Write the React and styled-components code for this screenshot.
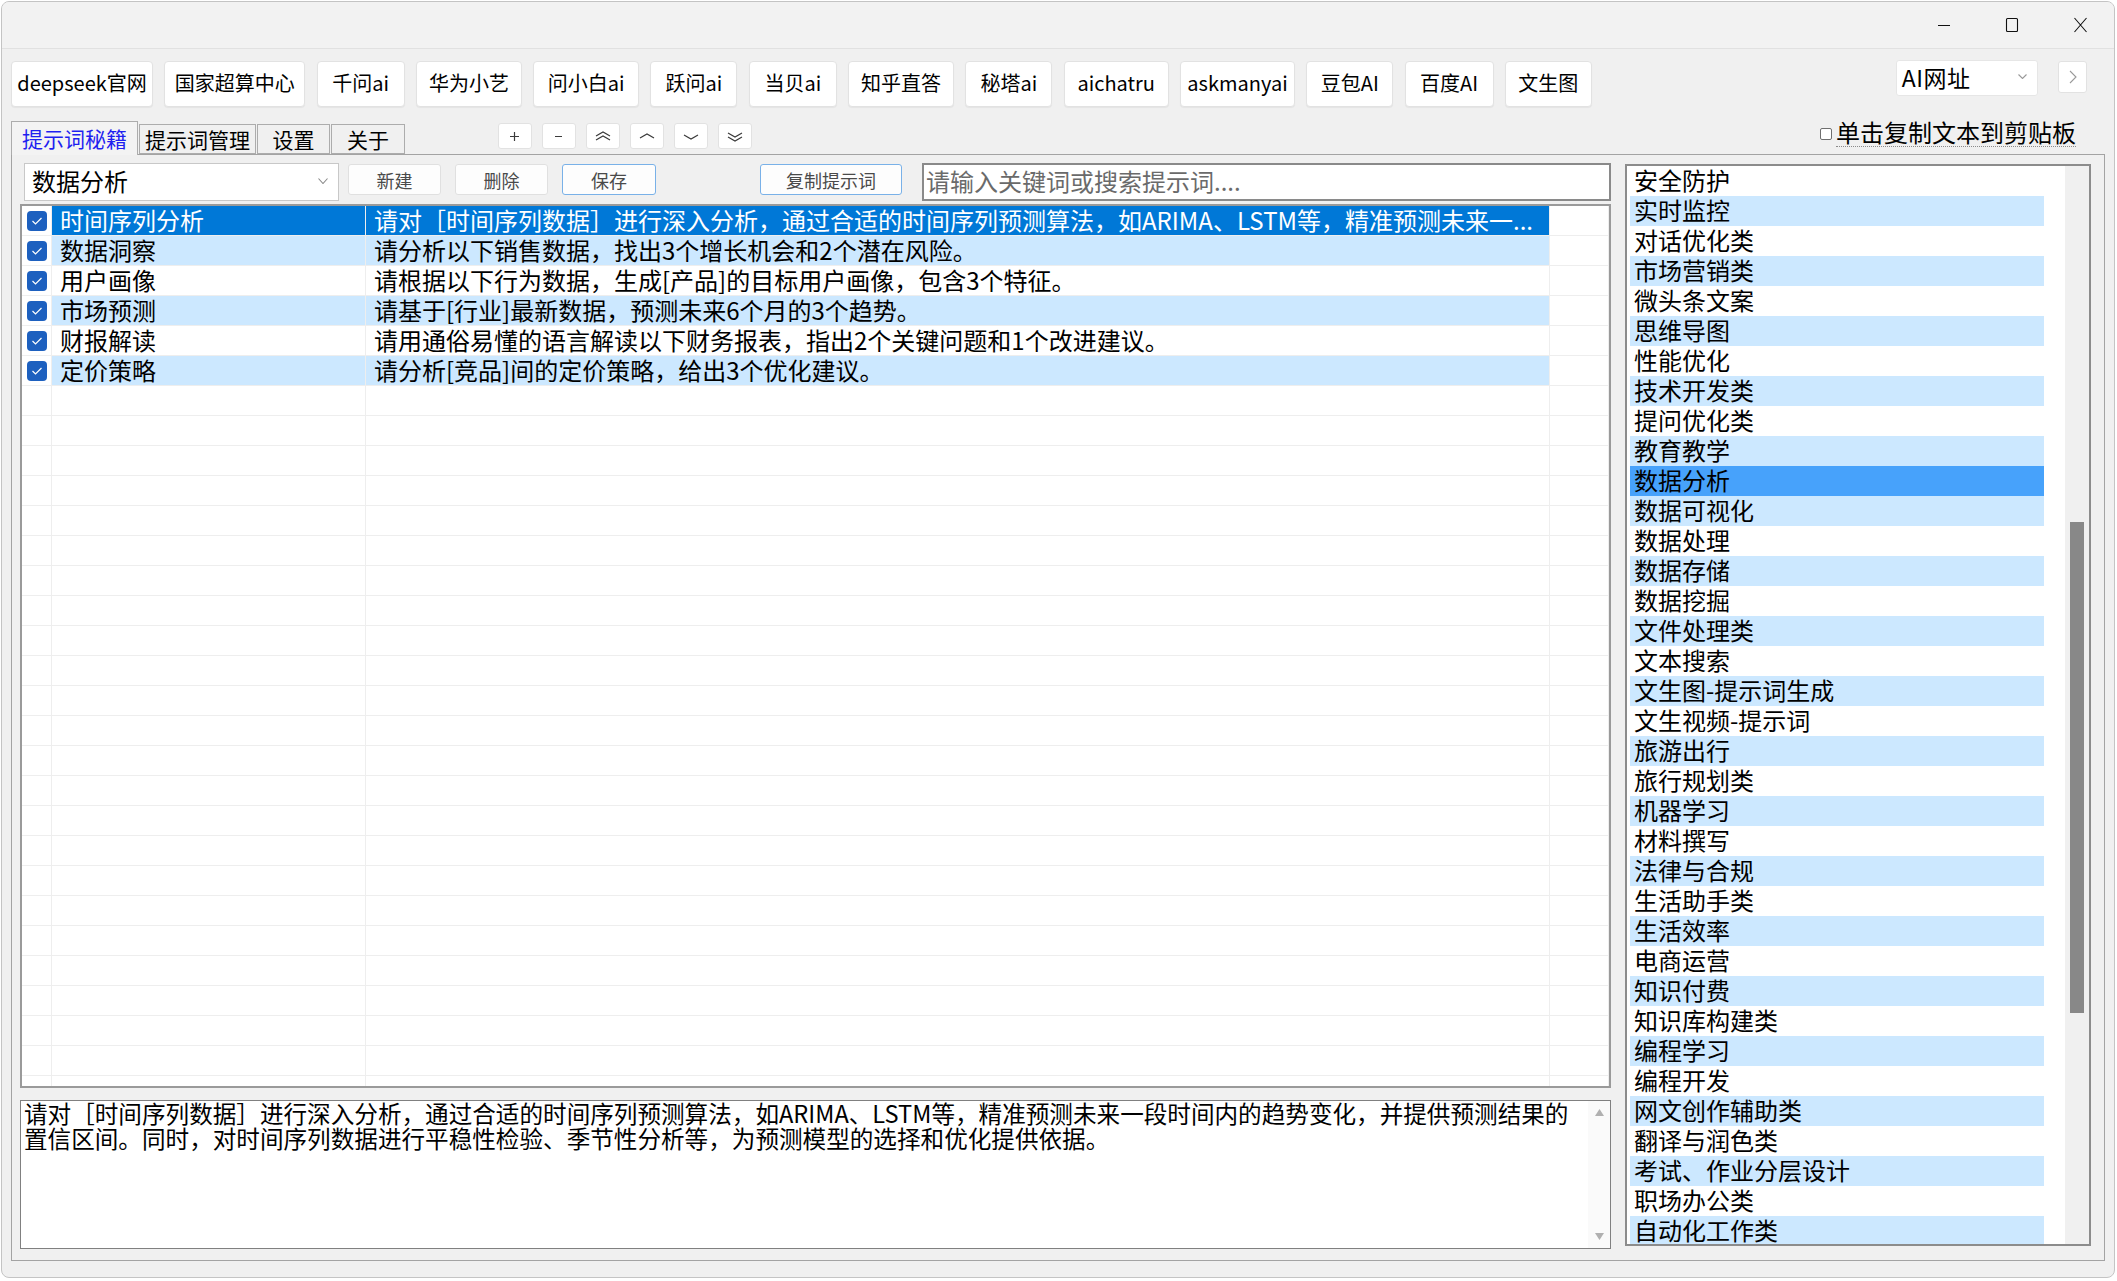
import React from 'react';
import styled, { createGlobalStyle } from 'styled-components';

const GlobalStyle = createGlobalStyle`
  html, body {
    margin: 0;
    padding: 0;
    background: #ffffff;
  }
  body {
    font-family: "Noto Sans CJK SC", "Noto Sans", "Liberation Sans", sans-serif;
    color: #000;
  }
  * {
    box-sizing: border-box;
  }
`;

const links = [
  { label: 'deepseek官网', w: 142 },
  { label: '国家超算中心', w: 141 },
  { label: '千问ai', w: 88 },
  { label: '华为小艺', w: 106 },
  { label: '问小白ai', w: 106 },
  { label: '跃问ai', w: 87 },
  { label: '当贝ai', w: 88 },
  { label: '知乎直答', w: 106 },
  { label: '秘塔ai', w: 87 },
  { label: 'aichatru', w: 105 },
  { label: 'askmanyai', w: 115 },
  { label: '豆包AI', w: 87 },
  { label: '百度AI', w: 89 },
  { label: '文生图', w: 87 },
];

const tabs = [
  { label: '提示词秘籍', w: 127, active: true },
  { label: '提示词管理', w: 117 },
  { label: '设置', w: 73 },
  { label: '关于', w: 74 },
];

const prompts = [
  ['时间序列分析', '请对［时间序列数据］进行深入分析，通过合适的时间序列预测算法，如ARIMA、LSTM等，精准预测未来一...'],
  ['数据洞察', '请分析以下销售数据，找出3个增长机会和2个潜在风险。'],
  ['用户画像', '请根据以下行为数据，生成[产品]的目标用户画像，包含3个特征。'],
  ['市场预测', '请基于[行业]最新数据，预测未来6个月的3个趋势。'],
  ['财报解读', '请用通俗易懂的语言解读以下财务报表，指出2个关键问题和1个改进建议。'],
  ['定价策略', '请分析[竞品]间的定价策略，给出3个优化建议。'],
];

const categories = [
  '安全防护', '实时监控', '对话优化类', '市场营销类', '微头条文案', '思维导图',
  '性能优化', '技术开发类', '提问优化类', '教育教学', '数据分析', '数据可视化',
  '数据处理', '数据存储', '数据挖掘', '文件处理类', '文本搜索', '文生图-提示词生成',
  '文生视频-提示词', '旅游出行', '旅行规划类', '机器学习', '材料撰写', '法律与合规',
  '生活助手类', '生活效率', '电商运营', '知识付费', '知识库构建类', '编程学习',
  '编程开发', '网文创作辅助类', '翻译与润色类', '考试、作业分层设计', '职场办公类', '自动化工作类',
];

const detailText =
  '请对［时间序列数据］进行深入分析，通过合适的时间序列预测算法，如ARIMA、LSTM等，精准预测未来一段时间内的趋势变化，并提供预测结果的\n置信区间。同时，对时间序列数据进行平稳性检验、季节性分析等，为预测模型的选择和优化提供依据。';

const Window = styled.div`
  width: 2114px;
  height: 1277px;
  margin: 1px 0 0 1px;
  border: 1px solid #c4c4c4;
  border-radius: 8px;
  background: #f0f0f0;
  display: flex;
  flex-direction: column;
  overflow: hidden;
`;

const TitleBar = styled.div`
  height: 47px;
  flex-shrink: 0;
  display: flex;
  justify-content: flex-end;
  border-bottom: 1px solid #e1e1e1;
  background: #f2f2f2;
`;

const TitleButton = styled.div`
  width: 68px;
  height: 100%;
  display: flex;
  align-items: center;
  justify-content: center;
`;

const Body = styled.div`
  flex: 1;
  display: flex;
  flex-direction: column;
  padding: 0 9px 16px 9px;
  min-height: 0;
`;

const LinkBar = styled.div`
  margin-top: 12px;
  display: flex;
  align-items: flex-start;
  gap: 11.3px;
`;

const LinkButton = styled.div`
  width: ${(p) => p.w}px;
  height: 46px;
  flex-shrink: 0;
  display: flex;
  align-items: center;
  justify-content: center;
  padding-bottom: 2px;
  background: #ffffff;
  border: 1px solid #e2e2e2;
  border-radius: 4px;
  box-shadow: 0 1px 1px rgba(0, 0, 0, 0.05);
  font-size: 20px;
  line-height: 26px;
  white-space: nowrap;
`;

const UrlCombo = styled.div`
  margin-left: auto;
  margin-top: -1px;
  width: 142px;
  height: 36px;
  display: flex;
  align-items: center;
  justify-content: space-between;
  padding: 0 10px 3px 5px;
  background: #ffffff;
  border: 1px solid #e6e6e6;
  border-radius: 3px;
  font-size: 23px;
  line-height: 28px;
  letter-spacing: 0.5px;
`;

const NextButton = styled.div`
  width: 29px;
  height: 32px;
  margin-left: 9px;
  margin-right: 18px;
  display: flex;
  align-items: center;
  justify-content: center;
  background: #ffffff;
  border: 1px solid #e2e2e2;
  border-radius: 3px;
`;

const TabRow = styled.div`
  margin-top: 14px;
  height: 33px;
  display: flex;
  align-items: flex-end;
  gap: 1px;
  position: relative;
  z-index: 2;
`;

const Tab = styled.div`
  width: ${(p) => p.w}px;
  height: ${(p) => (p.active ? 34 : 30)}px;
  margin-bottom: ${(p) => (p.active ? -1 : 0)}px;
  flex-shrink: 0;
  display: flex;
  align-items: center;
  justify-content: center;
  padding-bottom: ${(p) => (p.active ? 1 : 0)}px;
  border: 1px solid #acacac;
  border-bottom: ${(p) => (p.active ? 'none' : '1px solid #acacac')};
  background: ${(p) => (p.active ? '#f3f3f3' : '#f0f0f0')};
  color: ${(p) => (p.active ? '#1f1ff0' : '#000')};
  font-size: 21px;
  line-height: 26px;
  white-space: nowrap;
`;

const OrderGroup = styled.div`
  align-self: flex-start;
  margin-top: 2px;
  margin-left: 92px;
  display: flex;
  gap: 10px;
`;

const OrderButton = styled.div`
  width: 34px;
  height: 26px;
  display: flex;
  align-items: center;
  justify-content: center;
  background: #ffffff;
  border: 1px solid #e2e2e2;
  border-radius: 3px;
`;

const CopyOption = styled.label`
  margin-left: auto;
  margin-right: 29px;
  align-self: flex-start;
  margin-top: -3px;
  display: flex;
  align-items: center;
  gap: 4px;
  font-size: 24px;
  line-height: 28px;
`;

const SmallBox = styled.span`
  width: 12px;
  height: 12px;
  margin-top: 2px;
  border: 1px solid #6f6f6f;
  border-radius: 2px;
  background: #ffffff;
`;

const OptionText = styled.span`
  border-bottom: 1px dotted #8a8a8a;
`;

const TabPanel = styled.div`
  flex: 1;
  min-height: 0;
  display: flex;
  gap: 14px;
  padding: 8px 12px 10px 8px;
  border: 1px solid #a3a3a3;
  background: #f0f0f0;
`;

const LeftPane = styled.div`
  width: 1591px;
  display: flex;
  flex-direction: column;
`;

const EditBar = styled.div`
  height: 38px;
  padding-left: 4px;
  display: flex;
  align-items: flex-start;
`;

const CategoryCombo = styled.div`
  width: 315px;
  height: 38px;
  display: flex;
  align-items: center;
  justify-content: space-between;
  padding: 0 10px 3px 7px;
  background: #ffffff;
  border: 1px solid #c8c8c8;
  font-size: 24px;
  line-height: 30px;
`;

const ActionButton = styled.div`
  width: ${(p) => p.w}px;
  height: 31px;
  margin-top: 1px;
  margin-left: ${(p) => p.ml}px;
  display: flex;
  align-items: center;
  justify-content: center;
  background: #fdfdfd;
  border: 1px solid ${(p) => (p.focus ? '#79b1e8' : '#e0e0e0')};
  border-radius: 3px;
  font-size: 18px;
  line-height: 24px;
  color: #4a4a4a;
`;

const SearchBox = styled.input`
  flex: 1;
  margin-left: 20px;
  height: 38px;
  padding: 0 0 3px 2px;
  border: 2px solid #8a8a8a;
  background: #ffffff;
  font-family: inherit;
  font-size: 24px;
  outline: none;
  &::placeholder {
    color: #6a6a6a;
  }
`;

const Grid = styled.div`
  margin-top: 3px;
  height: 884px;
  flex-shrink: 0;
  border: 2px solid #9a9a9a;
  background: #ffffff;
  overflow: hidden;
`;

const GridRow = styled.div`
  display: grid;
  grid-template-columns: 30px 314px 1184px 1fr;
  height: 30px;
`;

const toneBg = { sel: '#0078d7', alt: '#cce8ff', none: '#ffffff' };

const Cell = styled.div`
  background: ${(p) => toneBg[p.tone || 'none']};
  color: ${(p) => (p.tone === 'sel' ? '#ffffff' : '#000')};
  border-right: 1px solid #eeeeee;
  border-bottom: 1px solid #eeeeee;
  padding-left: 8px;
  font-size: 24px;
  line-height: 27px;
  white-space: nowrap;
`;

const CheckCell = styled.div`
  display: flex;
  align-items: center;
  justify-content: center;
  border-right: 1px solid #eeeeee;
  border-bottom: 1px solid #eeeeee;
  background: #ffffff;
`;

const CheckBox = styled.span`
  width: 20px;
  height: 20px;
  border-radius: 4px;
  background: #1d60bf;
  display: flex;
  align-items: center;
  justify-content: center;
`;

const Detail = styled.div`
  margin-top: 12px;
  height: 149px;
  flex-shrink: 0;
  display: flex;
  border: 1px solid #808080;
  background: #ffffff;
`;

const DetailText = styled.div`
  flex: 1;
  padding: 0 0 0 3px;
  font-size: 23.6px;
  line-height: 25px;
  white-space: pre;
  overflow: hidden;
`;

const DetailScroll = styled.div`
  width: 22px;
  display: flex;
  flex-direction: column;
  justify-content: space-between;
  align-items: center;
  padding: 8px 0 8px;
  background: #fafafa;
`;

const CategoryList = styled.div`
  width: 466px;
  height: 1082px;
  margin-top: 1px;
  display: flex;
  border: 2px solid #8c8c8c;
  background: #ffffff;
  overflow: hidden;
`;

const Items = styled.div`
  width: 414px;
  margin-left: 3px;
  display: flex;
  flex-direction: column;
`;

const Item = styled.div`
  height: 30px;
  flex-shrink: 0;
  padding-left: 4px;
  font-size: 24px;
  line-height: 27px;
  white-space: nowrap;
  background: ${(p) => (p.sel ? '#47a2fb' : p.alt ? '#cce8ff' : '#ffffff')};
`;

const ListScroll = styled.div`
  margin-left: auto;
  width: 24px;
  padding: 0 5px;
  background: #f0f0f0;
`;

const Thumb = styled.div`
  margin-top: ${(p) => p.top}px;
  height: ${(p) => p.h}px;
  background: #888888;
`;

const Chevron = ({ w = 10, h = 6, color = '#8a8a8a' }) => (
  <svg width={w} height={h} viewBox={`0 0 ${w} ${h}`}>
    <path d={`M0.5 0.5 L${w / 2} ${h - 0.5} L${w - 0.5} 0.5`} fill="none" stroke={color} strokeWidth="1.1" />
  </svg>
);

const OrderIcon = ({ kind }) => {
  const paths = {
    plus: 'M3 7.5 H12 M7.5 3 V12',
    minus: 'M4 7.5 H11',
    top: 'M1 7 L8 3 L15 7 M1 11 L8 7 L15 11',
    up: 'M1 9 L8 5 L15 9',
    down: 'M1 6 L8 10 L15 6',
    bottom: 'M1 4 L8 8 L15 4 M1 8 L8 12 L15 8',
  };
  return (
    <svg width="16" height="15" viewBox="0 0 16 15">
      <path d={paths[kind]} fill="none" stroke="#3c3c3c" strokeWidth="1.2" />
    </svg>
  );
};

export default function App() {
  const rows = Array.from({ length: 30 }, (_, i) => prompts[i] || null);

  return (
    <>
      <GlobalStyle />
      <Window>
        <TitleBar>
          <TitleButton>
            <svg width="14" height="14" viewBox="0 0 14 14">
              <path d="M1 7.5 H13" stroke="#111" strokeWidth="1.1" />
            </svg>
          </TitleButton>
          <TitleButton>
            <svg width="14" height="16" viewBox="0 0 14 16">
              <rect x="1.5" y="1.5" width="11" height="13" rx="1" fill="none" stroke="#111" strokeWidth="1.1" />
            </svg>
          </TitleButton>
          <TitleButton>
            <svg width="15" height="16" viewBox="0 0 15 16">
              <path d="M1.5 1 L13.5 15 M13.5 1 L1.5 15" stroke="#111" strokeWidth="1.1" />
            </svg>
          </TitleButton>
        </TitleBar>

        <Body>
          <LinkBar>
            {links.map((l) => (
              <LinkButton key={l.label} w={l.w}>{l.label}</LinkButton>
            ))}
            <UrlCombo>
              <span>AI网址</span>
              <Chevron w={9} h={5} color="#9a9a9a" />
            </UrlCombo>
            <NextButton>
              <svg width="8" height="14" viewBox="0 0 8 14">
                <path d="M1 1 L7 7 L1 13" fill="none" stroke="#9a9a9a" strokeWidth="1.1" />
              </svg>
            </NextButton>
          </LinkBar>

          <TabRow>
            {tabs.map((t) => (
              <Tab key={t.label} w={t.w} active={t.active}>{t.label}</Tab>
            ))}
            <OrderGroup>
              {['plus', 'minus', 'top', 'up', 'down', 'bottom'].map((k) => (
                <OrderButton key={k}><OrderIcon kind={k} /></OrderButton>
              ))}
            </OrderGroup>
            <CopyOption>
              <SmallBox />
              <OptionText>单击复制文本到剪贴板</OptionText>
            </CopyOption>
          </TabRow>

          <TabPanel>
            <LeftPane>
              <EditBar>
                <CategoryCombo>
                  <span>数据分析</span>
                  <Chevron w={10} h={6} />
                </CategoryCombo>
                <ActionButton w={93} ml={9}>新建</ActionButton>
                <ActionButton w={93} ml={14}>删除</ActionButton>
                <ActionButton w={94} ml={14} focus>保存</ActionButton>
                <ActionButton w={142} ml={104} focus>复制提示词</ActionButton>
                <SearchBox placeholder="请输入关键词或搜索提示词...." />
              </EditBar>

              <Grid>
                {rows.map((r, i) => {
                  const tone = !r ? 'none' : i === 0 ? 'sel' : i % 2 === 1 ? 'alt' : 'none';
                  return (
                    <GridRow key={i}>
                      <CheckCell>
                        {r && (
                          <CheckBox>
                            <svg width="12" height="10" viewBox="0 0 12 10">
                              <path d="M1.5 5 L4.5 8 L10.5 2" fill="none" stroke="#ffffff" strokeWidth="1.2" />
                            </svg>
                          </CheckBox>
                        )}
                      </CheckCell>
                      <Cell tone={tone}>{r ? r[0] : ''}</Cell>
                      <Cell tone={tone}>{r ? r[1] : ''}</Cell>
                      <Cell />
                    </GridRow>
                  );
                })}
              </Grid>

              <Detail>
                <DetailText>{detailText}</DetailText>
                <DetailScroll>
                  <svg width="9" height="7" viewBox="0 0 9 7"><path d="M4.5 0 L9 7 H0 Z" fill="#b0b0b0" /></svg>
                  <svg width="9" height="7" viewBox="0 0 9 7"><path d="M0 0 H9 L4.5 7 Z" fill="#b0b0b0" /></svg>
                </DetailScroll>
              </Detail>
            </LeftPane>

            <CategoryList>
              <Items>
                {categories.map((c, i) => (
                  <Item key={c} sel={c === '数据分析'} alt={i % 2 === 1}>{c}</Item>
                ))}
              </Items>
              <ListScroll>
                <Thumb top={356} h={491} />
              </ListScroll>
            </CategoryList>
          </TabPanel>
        </Body>
      </Window>
    </>
  );
}
